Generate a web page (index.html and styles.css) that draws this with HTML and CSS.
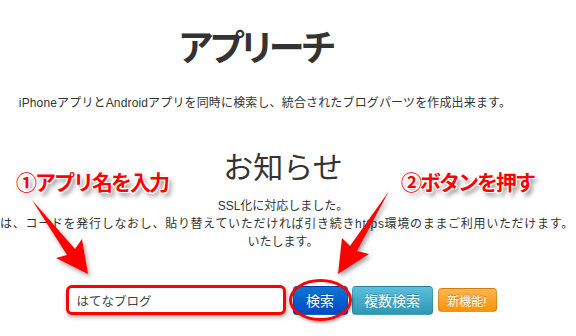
FILE: index.html
```html
<!DOCTYPE html>
<html lang="ja">
<head>
  <meta charset="UTF-8" />
  <meta name="viewport" content="width=device-width, initial-scale=1.0" />
  <title>アプリーチ</title>
  <link rel="stylesheet" href="styles.css">
</head>
<body>
  <div class="page">
    <header class="hero">
      <h1>アプリーチ</h1>
      <p class="lead">iPhoneアプリとAndroidアプリを同時に検索し、統合されたブログパーツを作成出来ます。</p>
    </header>

    <section class="news">
      <h2>お知らせ</h2>
      <p>SSL化に対応しました。</p>
      <p class="wide">は、コードを発行しなおし、貼り替えていただければ引き続きhttps環境のままご利用いただけます。</p>
      <p>いたします。</p>
    </section>

    <form class="search" onsubmit="return false;">
      <input type="text" class="app-name" value="はてなブログ" />
      <button class="btn btn-primary btn-marked">検索</button>
      <button class="btn btn-info">複数検索</button>
      <button class="btn btn-warning btn-small">新機能!</button>
    </form>
  </div>

  <!-- annotations drawn over the page -->
  <div class="note note-1">①アプリ名を入力</div>
  <div class="note note-2">②ボタンを押す</div>
  <svg class="arrows" width="576" height="336" viewBox="0 0 576 336">
    <defs>
      <filter id="shadow" x="-20%" y="-20%" width="140%" height="140%">
        <feDropShadow dx="2" dy="3" stdDeviation="2" flood-color="#000" flood-opacity="0.35"/>
      </filter>
    </defs>
    <polygon filter="url(#shadow)" fill="#ff0000" points="32,200 75,249 82,239 88,274 56,258 67,255" />
    <polygon filter="url(#shadow)" fill="#ff0000" points="389,191 357,251 369,254 338,274 342,238 350,246" />
  </svg>
</body>
</html>
```

FILE: styles.css
```css
* {
  box-sizing: border-box;
  margin: 0;
  padding: 0;
}
html, body {
  overflow: hidden;
}
body {
  width: 576px;
  height: 336px;
  background: #fff;
  color: #333;
  font-family: "Liberation Sans", "Noto Sans CJK JP", sans-serif;
  font-size: 12px;
  line-height: 18px;
  position: relative;
}
.page {
  padding: 22px 10px 0 0;
  display: flex;
  flex-direction: column;
  align-items: center;
}
.hero {
  display: flex;
  flex-direction: column;
  align-items: center;
  padding-right: 36px;
}
h1 {
  font-family: "Noto Sans CJK JP", sans-serif;
  font-size: 36px;
  line-height: 46px;
  font-weight: bold;
  font-feature-settings: "palt";
  letter-spacing: -2.5px;
  margin-right: 18px;
  color: #333;
}
.lead {
  margin-top: 26px;
  white-space: nowrap;
  letter-spacing: 0.15px;
}
.news {
  margin-top: 35px;
  display: flex;
  flex-direction: column;
  align-items: center;
}
.news h2 {
  font-family: "Noto Sans CJK JP", sans-serif;
  font-size: 30px;
  line-height: 36px;
  font-weight: normal;
  margin-bottom: 14px;
}
.news p {
  white-space: nowrap;
}
.news .wide {
  letter-spacing: 0.7px;
  margin-left: 8px;
}
.search {
  margin-top: 34px;
  display: flex;
  align-items: center;
}
.app-name {
  width: 220px;
  height: 30px;
  padding: 0 8px;
  border: 3px solid #ff0000;
  border-radius: 6px;
  box-shadow: 1px 2px 4px rgba(0,0,0,0.35);
  font-family: "Liberation Sans", "Noto Sans CJK JP", sans-serif;
  font-size: 12.5px;
  color: #444;
  margin-right: 7px;
}
.btn {
  height: 29px;
  padding: 0;
  border: 1px solid rgba(0,0,0,0.15);
  border-radius: 4px;
  color: #fff;
  font-family: "Liberation Sans", "Noto Sans CJK JP", sans-serif;
  font-size: 14px;
  white-space: nowrap;
  text-shadow: 0 -1px 0 rgba(0,0,0,0.25);
  cursor: pointer;
  margin-right: 4px;
}
.btn-primary {
  width: 55px;
  background: linear-gradient(#0a78d0, #0046c8);
}
.btn-info {
  width: 81px;
  background: linear-gradient(#5bc0de, #2f96b4);
}
.btn-warning {
  background: linear-gradient(#fbb450, #f89406);
}
.btn-small {
  width: 59px;
  height: 24px;
  font-size: 12px;
  margin-left: 1px;
}
.btn-marked {
  position: relative;
}
.btn-marked::after {
  content: "";
  position: absolute;
  left: -5px;
  right: -5px;
  top: -8px;
  bottom: -7px;
  border: 3px solid #ff0000;
  border-radius: 50%;
  box-shadow: 1px 2px 3px rgba(0,0,0,0.3);
}
.note {
  position: absolute;
  top: 168px;
  font-family: "Noto Sans CJK JP", sans-serif;
  font-size: 21px;
  line-height: 26px;
  font-weight: bold;
  color: #ff0000;
  letter-spacing: -2px;
  white-space: nowrap;
  text-shadow:
    1px 1px 0 #fff, -1px -1px 0 #fff, 1px -1px 0 #fff, -1px 1px 0 #fff,
    3px 4px 4px rgba(0,0,0,0.45);
}
.note-1 {
  left: 16px;
}
.note-2 {
  left: 401px;
}
.arrows {
  position: absolute;
  left: 0;
  top: 0;
  pointer-events: none;
}
```
